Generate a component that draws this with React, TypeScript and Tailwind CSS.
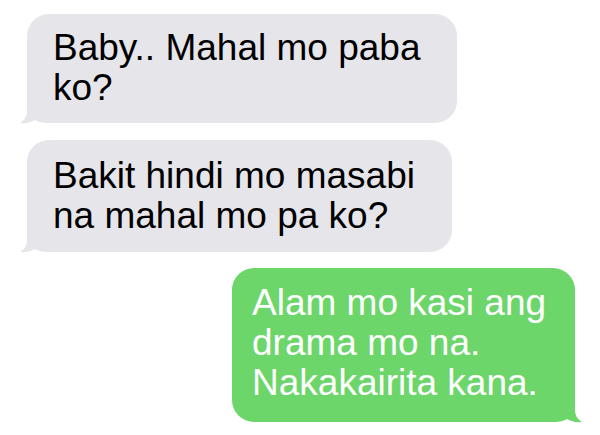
import React from 'react';

type Side = 'in' | 'out';

function Tail({ side, color }: { side: Side; color: string }) {
  return (
    <svg
      width="30"
      height="24"
      viewBox="0 0 30 24"
      className={
        side === 'in'
          ? 'absolute -left-[7px] -bottom-[1px]'
          : 'absolute -right-[7px] -bottom-[1px] -scale-x-100'
      }
    >
      <path
        d="M7 0 L7 10 C7 16 5 20 0 23 C6 23.5 11 22.5 15 20 C18 22 22 23 30 23 L30 0 Z"
        fill={color}
      />
    </svg>
  );
}

function Bubble({
  side,
  lines,
  className,
}: {
  side: Side;
  lines: string[];
  className: string;
}) {
  const isOut = side === 'out';
  return (
    <div
      className={`relative rounded-[22px] ${
        isOut ? 'bg-[#6cd66b] text-white' : 'bg-[#e5e5ea] text-black'
      } ${className}`}
    >
      <Tail side={side} color={isOut ? '#6cd66b' : '#e5e5ea'} />
      <div className="relative text-[37px] leading-[40px]">
        {lines.map((l) => (
          <div key={l}>{l}</div>
        ))}
      </div>
    </div>
  );
}

export default function App() {
  return (
    <div
      className="w-[600px] h-[435px] bg-white overflow-hidden flex flex-col pt-[14px]"
      style={{ fontFamily: '"Liberation Sans", Arial, sans-serif' }}
    >
      <Bubble
        side="in"
        lines={['Baby.. Mahal mo paba', 'ko?']}
        className="ml-[27px] w-[430px] pl-[26px] pt-[14px] pb-[15px]"
      />
      <Bubble
        side="in"
        lines={['Bakit hindi mo masabi', 'na mahal mo pa ko?']}
        className="ml-[27px] mt-[17px] w-[425px] pl-[26px] pt-[16px] pb-[16px]"
      />
      <Bubble
        side="out"
        lines={['Alam mo kasi ang', 'drama mo na.', 'Nakakairita kana.']}
        className="ml-[232px] mt-[16px] w-[343px] pl-[20px] pt-[15px] pb-[19px]"
      />
    </div>
  );
}
